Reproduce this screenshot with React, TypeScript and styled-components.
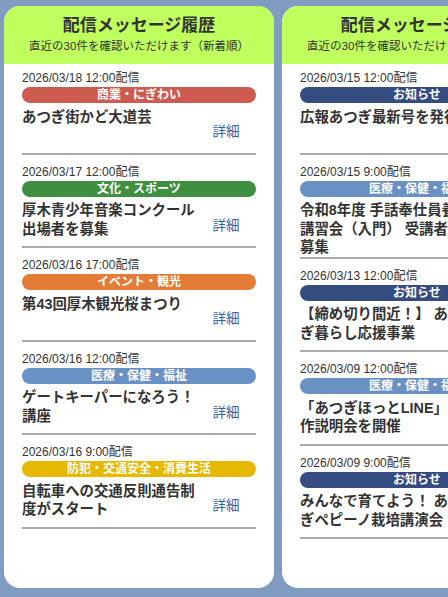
import React from "react";
import styled, { createGlobalStyle } from "styled-components";

const GlobalStyle = createGlobalStyle`
  html, body {
    margin: 0;
    padding: 0;
  }
  body {
    background: #809cc0;
    font-family: "Liberation Sans", "Noto Sans CJK JP", sans-serif;
    color: #333;
  }
  * { box-sizing: border-box; }
`;

const Page = styled.div`
  display: flex;
  gap: 8px;
  height: 100vh;
  padding: 6px 4px 9px;
  overflow: hidden;
`;

const Card = styled.section`
  flex: 0 0 270px;
  background: #ffffff;
  border-radius: 16px;
  overflow: hidden;
  display: flex;
  flex-direction: column;
`;

const Header = styled.header`
  background: #bfff5e;
  text-align: center;
  padding: 8px 0 10px;
`;

const Title = styled.h1`
  margin: 0;
  font-size: 17px;
  line-height: 24px;
  font-weight: 700;
  color: #333;
`;

const Subtitle = styled.p`
  margin: 0;
  font-size: 11.5px;
  line-height: 16px;
  color: #333;
`;

const List = styled.ul`
  list-style: none;
  margin: 0;
  padding: 0 18px;
`;

const Item = styled.li`
  padding-top: 9px;
  border-bottom: 2px solid #aaaaaa;
  &:first-child {
    padding-top: 6px;
  }
`;

const DateLine = styled.div`
  font-size: 12px;
  line-height: 16px;
  color: #333;
`;

const Tag = styled.div<{ $color: string }>`
  margin-top: 1px;
  height: 16px;
  border-radius: 8px;
  background: ${(p) => p.$color};
  color: #ffffff;
  font-size: 12px;
  line-height: 16px;
  font-weight: 700;
  text-align: center;
  white-space: nowrap;
`;

const Row = styled.div`
  display: flex;
  align-items: flex-start;
  margin-top: 4.5px;
`;

const ItemTitle = styled.div`
  flex: 1;
  min-width: 0;
  font-size: 14.4px;
  line-height: 18.5px;
  font-weight: 700;
  color: #333;
`;

const DetailLink = styled.a`
  flex: 0 0 60px;
  height: 45px;
  display: flex;
  align-items: center;
  justify-content: center;
  font-size: 13.5px;
  color: #3662a6;
  text-decoration: none;
`;

type Category =
  | "商業・にぎわい"
  | "文化・スポーツ"
  | "イベント・観光"
  | "医療・保健・福祉"
  | "防犯・交通安全・消費生活"
  | "お知らせ";

const tagColors: Record<Category, string> = {
  "商業・にぎわい": "#ce5b50",
  "文化・スポーツ": "#3f8f41",
  "イベント・観光": "#e27c36",
  "医療・保健・福祉": "#6a91c3",
  "防犯・交通安全・消費生活": "#e7b800",
  "お知らせ": "#344c80",
};

type Message = { date: string; category: Category; title: string };

const column1: Message[] = [
  { date: "2026/03/18 12:00配信", category: "商業・にぎわい", title: "あつぎ街かど大道芸" },
  { date: "2026/03/17 12:00配信", category: "文化・スポーツ", title: "厚木青少年音楽コンクール出場者を募集" },
  { date: "2026/03/16 17:00配信", category: "イベント・観光", title: "第43回厚木観光桜まつり" },
  { date: "2026/03/16 12:00配信", category: "医療・保健・福祉", title: "ゲートキーパーになろう！講座" },
  { date: "2026/03/16 9:00配信", category: "防犯・交通安全・消費生活", title: "自転車への交通反則通告制度がスタート" },
];

const column2: Message[] = [
  { date: "2026/03/15 12:00配信", category: "お知らせ", title: "広報あつぎ最新号を発行" },
  { date: "2026/03/15 9:00配信", category: "医療・保健・福祉", title: "令和8年度 手話奉仕員養成講習会（入門） 受講者を募集" },
  { date: "2026/03/13 12:00配信", category: "お知らせ", title: "【締め切り間近！】 あつぎ暮らし応援事業" },
  { date: "2026/03/09 12:00配信", category: "医療・保健・福祉", title: "「あつぎほっとLINE」操作説明会を開催" },
  { date: "2026/03/09 9:00配信", category: "お知らせ", title: "みんなで育てよう！ あつぎペピーノ栽培講演会" },
];

const HistoryCard: React.FC<{ items: Message[] }> = ({ items }) => (
  <Card>
    <Header>
      <Title>配信メッセージ履歴</Title>
      <Subtitle>直近の30件を確認いただけます（新着順）</Subtitle>
    </Header>
    <List>
      {items.map((m, i) => (
        <Item key={i}>
          <DateLine>{m.date}</DateLine>
          <Tag $color={tagColors[m.category]}>{m.category}</Tag>
          <Row>
            <ItemTitle>{m.title}</ItemTitle>
            <DetailLink href="#">詳細</DetailLink>
          </Row>
        </Item>
      ))}
    </List>
  </Card>
);

export default function App() {
  return (
    <>
      <GlobalStyle />
      <Page>
        <HistoryCard items={column1} />
        <HistoryCard items={column2} />
      </Page>
    </>
  );
}
